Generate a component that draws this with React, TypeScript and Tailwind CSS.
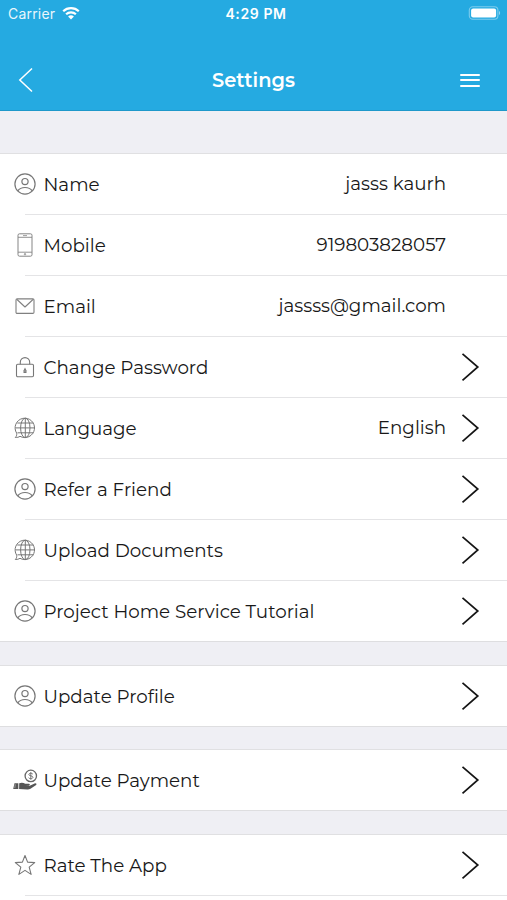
import type { ReactNode } from "react";

function UserIcon() {
  return (
    <svg viewBox="0 0 22 22" className="size-[22px]" fill="none" stroke="#777" strokeWidth="1.2">
      <circle cx="11" cy="11" r="10.1" />
      <circle cx="11" cy="8.6" r="3.1" />
      <path d="M3.8 17.9c1.6-2.4 4.2-3.4 7.2-3.4s5.6 1 7.2 3.4" />
    </svg>
  );
}

function PhoneIcon() {
  return (
    <svg viewBox="0 0 22 24" className="h-6 w-[22px]" fill="none" stroke="#858585">
      <rect x="4" y="0.8" width="14" height="22.4" rx="1.5" />
      <path d="M4 4.3h14M4 19.2h14" strokeWidth="0.9" />
      <path d="M9 2.6h4" strokeWidth="0.8" />
      <circle cx="11" cy="21.2" r="0.7" strokeWidth="0.9" />
    </svg>
  );
}

function MailIcon() {
  return (
    <svg viewBox="0 0 22 22" className="size-[22px]" fill="none" stroke="#808080" strokeWidth="1.1">
      <rect x="2" y="3.9" width="18" height="14.5" rx="1.2" />
      <path d="M3 4.5 11 12l8-7.5" strokeLinejoin="round" />
    </svg>
  );
}

function LockIcon() {
  return (
    <svg viewBox="0 0 22 22" className="size-[22px]" fill="none" stroke="#777" strokeWidth="1.1">
      <rect x="2.5" y="8.2" width="17" height="12.5" rx="1.2" />
      <path d="M6.3 8.2V6.3a4.700 4.700 0 0 1 9.400 0v1.900" />
      <path d="M11 11.600 12.500 14.400v2.500h-3v-2.500z" fill="#777" stroke="none" />
      <path d="M11 14.400v1.300" stroke="#fff" strokeWidth="0.5" />
    </svg>
  );
}

function GlobeIcon() {
  return (
    <svg viewBox="0 0 22 22" className="size-[22px]" fill="none" stroke="#777" strokeWidth="1">
      <path d="M2.7 16.2A9.7 9.7 0 1 1 6 19.3c-1.3.9-2.8 1.3-4.7 1.2 1-.9 1.6-2.2 1.4-4.3z" />
      <ellipse cx="11.3" cy="10.9" rx="4.7" ry="9.7" />
      <path d="M11.3 1.2v19.4M1.5 10.900h19.500M3.300 6h16M3.500 15.800h16" />
    </svg>
  );
}

function PaymentIcon() {
  return (
    <svg viewBox="0 0 26 22" className="h-[22px] w-[26px]" fill="none">
      <circle cx="18.8" cy="6.9" r="5.7" stroke="#666" strokeWidth="1.3" />
      <path
        d="M20.800 5.100c-.5-.6-1.200-.9-2-.9-1.100 0-1.900.5-1.900 1.300 0 1.900 4 .8 4 2.800 0 .8-.9 1.400-2.100 1.400-.9 0-1.700-.3-2.200-1M18.800 3.200v7.500"
        stroke="#666"
        strokeWidth="0.9"
      />
      <path d="M2.5 14.3h3.8v5.8H1.2z" fill="#555" />
      <path d="M3.3 15.3 2.8 19" stroke="#bbb" strokeWidth="0.7" />
      <path
        d="M7.200 14.300c2.300-1 4.200-.6 6 .4h3.700c1.200 0 1.300 1.500.1 1.700l-3.300.2 4 .1 4.900-2.300c1.400-.5 2.600.6 1.500 1.500l-5.600 3.800c-1 .6-1.900.9-3.100.8l-4.300-.3-4-.1z"
        fill="#555"
      />
    </svg>
  );
}

function StarIcon() {
  return (
    <svg viewBox="0 0 22 22" className="size-[22px]" fill="none" stroke="#777" strokeWidth="1.1">
      <path
        d="m11 1.500 2.600 6.600 7.100.5-5.500 4.600 1.900 7.200-6.100-4-6.100 4 1.900-7.200-5.500-4.600 7.100-.5z"
        strokeLinejoin="round"
      />
    </svg>
  );
}

function ChevronIcon() {
  return (
    <svg viewBox="0 0 20 30" className="h-[30px] w-5" fill="none" stroke="#151515" strokeWidth="1.7">
      <path d="M2.5 1.8 17.8 15 2.5 28.3" />
    </svg>
  );
}

type Row = {
  icon: ReactNode;
  label: string;
  value?: string;
  chevron?: boolean;
};

const accountRows: Row[] = [
  { icon: <UserIcon />, label: "Name", value: "jasss kaurh" },
  { icon: <PhoneIcon />, label: "Mobile", value: "919803828057" },
  { icon: <MailIcon />, label: "Email", value: "jassss@gmail.com" },
  { icon: <LockIcon />, label: "Change Password", chevron: true },
  { icon: <GlobeIcon />, label: "Language", value: "English", chevron: true },
  { icon: <UserIcon />, label: "Refer a Friend", chevron: true },
  { icon: <GlobeIcon />, label: "Upload Documents", chevron: true },
  { icon: <UserIcon />, label: "Project Home Service Tutorial", chevron: true },
];

const profileRows: Row[] = [{ icon: <UserIcon />, label: "Update Profile", chevron: true }];

const paymentRows: Row[] = [{ icon: <PaymentIcon />, label: "Update Payment", chevron: true }];

const appRows: Row[] = [{ icon: <StarIcon />, label: "Rate The App", chevron: true }];

function SettingsRow({ row, divider }: { row: Row; divider: boolean }) {
  return (
    <li>
      <div className="flex h-[60px] items-center pr-[27px] pl-3">
        <span className="flex w-[26px] shrink-0 justify-center">{row.icon}</span>
        <span className="ml-[5.5px] pt-[2px] whitespace-nowrap">{row.label}</span>
        {row.value && <span className="ml-auto whitespace-nowrap">{row.value}</span>}
        <span className={`flex w-5 shrink-0 ${row.value ? "ml-[14px]" : "ml-auto"}`}>
          {row.chevron && <ChevronIcon />}
        </span>
      </div>
      <div className={divider ? "ml-[25px] h-px bg-[#e4e4e6]" : "h-px bg-[#dedee0]"} />
    </li>
  );
}

function SettingsGroup({ rows, open }: { rows: Row[]; open?: boolean }) {
  return (
    <ul className={`border-t border-[#e0e0e2] bg-white ${open ? "pb-6" : ""}`}>
      {rows.map((row, i) => (
        <SettingsRow key={row.label} row={row} divider={open || i < rows.length - 1} />
      ))}
    </ul>
  );
}

function StatusBar() {
  return (
    <div className="grid h-7 grid-cols-3 items-center pr-[6px] pl-2 font-['Inter',sans-serif] text-[14px]">
      <div className="flex items-center gap-[7px]">
        <span className="tracking-[0.2px] opacity-90">Carrier</span>
        <svg viewBox="0 0 18 14" className="h-[14px] w-[18px] -translate-y-px" fill="none" stroke="#fff" strokeWidth="2.2">
          <path d="M1.200 5.200a11.200 11.200 0 0 1 15.600 0M4.100 8.300a7 7 0 0 1 9.800 0" />
          <path d="M9 13.400 6.100 10.600a4.200 4.200 0 0 1 5.800 0z" fill="#fff" stroke="none" />
        </svg>
      </div>
      <span className="ml-[3px] justify-self-center font-semibold tracking-[0.6px]">4:29 PM</span>
      <svg viewBox="0 0 33 14" className="h-[14px] w-[33px] -translate-y-px justify-self-end" fill="none">
        <rect x="1.3" y="0.8" width="28.6" height="12.4" rx="3.5" stroke="#fff" strokeOpacity="0.4" strokeWidth="1.1" />
        <rect x="3.1" y="2.5" width="25" height="9" rx="2" fill="#fff" />
        <path d="M31 5c1.5.6 1.5 3.4 0 4z" fill="#fff" fillOpacity="0.5" />
      </svg>
    </div>
  );
}

export default function App() {
  return (
    <main className="h-[900px] w-full overflow-hidden bg-[#efeff4] font-['Montserrat','Inter',sans-serif] text-[18.3px] leading-6 text-[#181818]">
      <header className="h-[111px] border-b border-[#1e98ca] bg-[#25aae1] text-white">
        <StatusBar />
        <div className="grid h-[82px] grid-cols-3 items-center pt-[22px] pr-[27px] pl-[18px]">
          <svg viewBox="0 0 16 26" className="h-[26px] w-4" fill="none" stroke="#fff" strokeWidth="1.5">
            <path d="M14 1.5 1.8 13 14 24.5" />
          </svg>
          <h1 className="ml-[9px] justify-self-center text-[19.4px] font-semibold">Settings</h1>
          <div className="flex w-5 flex-col gap-[3.5px] justify-self-end">
            <span className="h-[2px] rounded-full bg-white" />
            <span className="h-[2px] rounded-full bg-white" />
            <span className="h-[2px] rounded-full bg-white" />
          </div>
        </div>
      </header>
      <div className="flex flex-col gap-[22.5px] pt-[42px]">
        <SettingsGroup rows={accountRows} />
        <SettingsGroup rows={profileRows} />
        <SettingsGroup rows={paymentRows} />
        <SettingsGroup rows={appRows} open />
      </div>
    </main>
  );
}
